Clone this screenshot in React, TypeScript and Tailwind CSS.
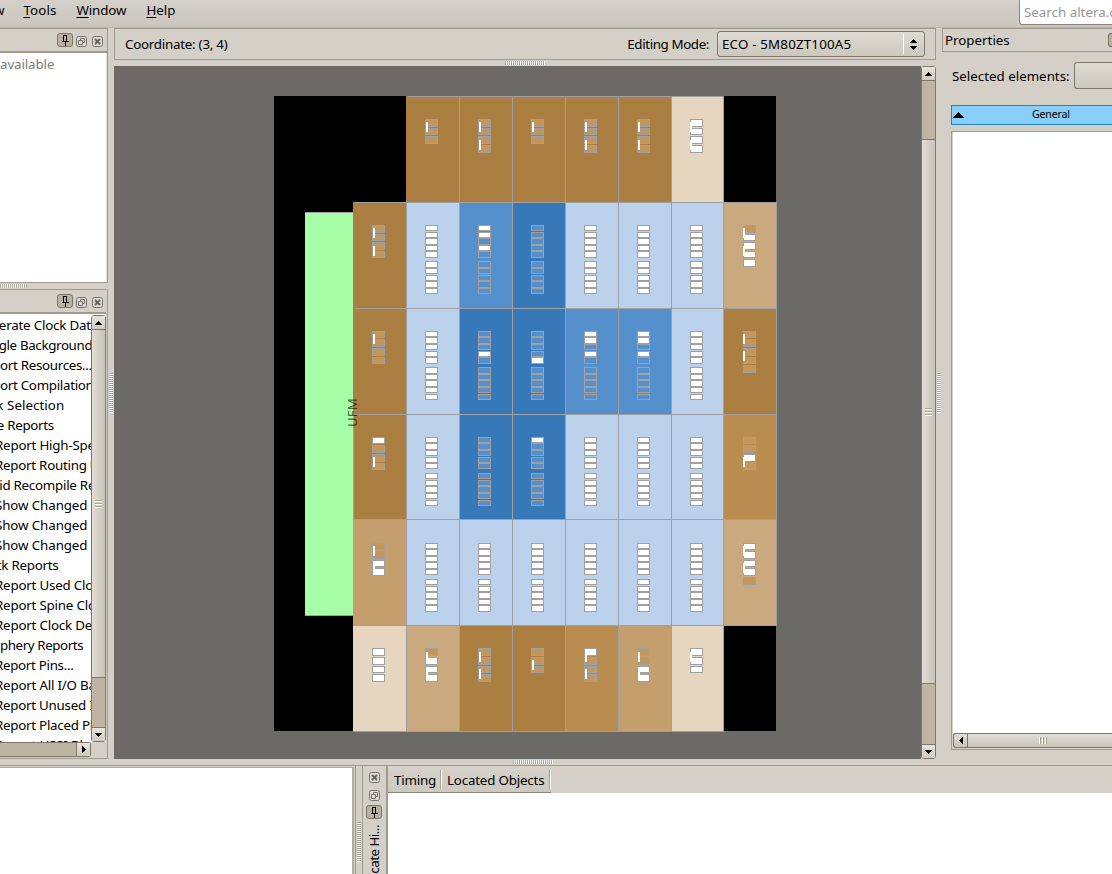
import React from "react";

/* ---------- floorplan data ---------- */

const COL_X = [353, 406, 459, 512, 565, 618, 671, 723, 776];
const ROW_Y = [96, 202, 308, 414, 519, 625, 731];

const GRID = "#a0a0a0";
const CELL: Record<string, string> = {
  E: "#ab7f42",
  F: "#b98d50",
  G: "#c49f6d",
  H: "#cba97e",
  I: "#e6d5bf",
  L: "#bbd1ec",
  M: "#5590cd",
  D: "#3778b8",
};
const IO_FILL = "#c1965f";
const LE_FILL = "#5590cd";

const CELLS = [" EEEEEI ", "ELMDLLLH", "ELDDMMLE", "ELDDLLLF", "GLLLLLLH", "IHEEFGI "];

type Span = [number, number];

const LAB_BOXES: Record<number, Span[]> = {
  1: [[225, 231], [232, 238], [238, 245], [245, 251], [251, 258], [261, 268], [268, 274], [275, 281], [281, 288], [288, 294]],
  2: [[331, 337], [337, 344], [344, 350], [351, 357], [357, 364], [367, 374], [374, 380], [380, 387], [387, 393], [394, 400]],
  3: [[437, 443], [443, 450], [450, 456], [457, 463], [463, 469], [473, 479], [480, 486], [486, 493], [493, 499], [500, 506]],
  4: [[543, 549], [549, 556], [556, 562], [562, 569], [569, 575], [579, 585], [586, 592], [592, 599], [599, 605], [605, 612]],
};

const IO_BOXES: Record<number, Span[]> = {
  0: [[119, 127], [128, 135], [136, 144], [145, 153]],
  1: [[225, 233], [234, 241], [242, 250], [251, 258], [259, 267]],
  2: [[331, 338], [339, 347], [348, 356], [357, 364], [365, 373]],
  3: [[437, 444], [445, 453], [454, 462], [463, 470]],
  4: [[543, 550], [551, 559], [560, 567], [568, 576], [577, 585]],
  5: [[648, 656], [657, 665], [666, 673], [674, 682]],
};

/* "w" is a free element, "u" a used one */
const LAB_USE: Record<string, string> = {
  "1,2": "wwuwuuuuuu",
  "1,3": "uuuuuuuuuu",
  "2,2": "uuuwuuuuuu",
  "2,3": "uuuuwuuuuu",
  "2,4": "wwuwuuuuuu",
  "2,5": "wwuwuuuuuu",
  "3,2": "uuuuuuuuuu",
  "3,3": "wuuuuuuuuu",
};

type Io = { r: number; c: number; use: string; bars: number[]; dx: number };
const IOS: Io[] = [
  { r: 0, c: 1, use: "uuu", bars: [122], dx: 1 },
  { r: 0, c: 2, use: "uuuu", bars: [122, 140], dx: 1 },
  { r: 0, c: 3, use: "uuu", bars: [122], dx: 1 },
  { r: 0, c: 4, use: "uuuu", bars: [122, 140], dx: 1 },
  { r: 0, c: 5, use: "uuuu", bars: [122, 140], dx: 1 },
  { r: 0, c: 6, use: "wwww", bars: [122, 140], dx: 0 },
  { r: 1, c: 0, use: "uuuu", bars: [228, 246], dx: 1 },
  { r: 1, c: 7, use: "uwwww", bars: [228, 246], dx: 0 },
  { r: 2, c: 0, use: "uuuu", bars: [334], dx: 1 },
  { r: 2, c: 7, use: "uuuuu", bars: [334, 351], dx: 0 },
  { r: 3, c: 0, use: "wuuu", bars: [457], dx: 1 },
  { r: 3, c: 7, use: "uuwu", bars: [457], dx: 0 },
  { r: 4, c: 0, use: "uuww", bars: [546, 563], dx: 1 },
  { r: 4, c: 7, use: "wwwwu", bars: [546, 563], dx: 0 },
  { r: 5, c: 0, use: "wwww", bars: [], dx: 1 },
  { r: 5, c: 1, use: "uwww", bars: [652, 669], dx: 1 },
  { r: 5, c: 2, use: "uuuu", bars: [652, 669], dx: 1 },
  { r: 5, c: 3, use: "uuu", bars: [660], dx: 1 },
  { r: 5, c: 4, use: "wuuu", bars: [652, 669], dx: 1 },
  { r: 5, c: 5, use: "uuww", bars: [652, 669], dx: 1 },
  { r: 5, c: 6, use: "www", bars: [652], dx: 0 },
];

function Element({ x, span, fill }: { x: number; span: Span; fill: string }) {
  return (
    <>
      <rect x={x} y={span[0]} width={13} height={span[1] - span[0]} fill={GRID} />
      <rect x={x + 1} y={span[0] + 1} width={11} height={span[1] - span[0] - 2} fill={fill} />
    </>
  );
}

function Floorplan() {
  return (
    <svg
      className="block h-[636px] w-[503px]"
      viewBox="274 96 503 636"
      shapeRendering="crispEdges"
    >
      <rect x={274} y={96} width={502} height={635} fill="#000" />
      <rect x={305} y={212} width={48} height={404} fill={GRID} />
      <rect x={305} y={213} width={48} height={402} fill="#a6ffa6" />
      {CELLS.map((row, r) =>
        row.split("").map((k, c) =>
          k === " " ? null : (
            <g key={`${r}-${c}`}>
              <rect
                x={COL_X[c]}
                y={ROW_Y[r]}
                width={COL_X[c + 1] - COL_X[c] + 1}
                height={ROW_Y[r + 1] - ROW_Y[r] + 1}
                fill={c === 0 && r < 3 ? CELL[k] : GRID}
              />
              {c === 0 && r < 3 && (
                <>
                  <rect x={355} y={ROW_Y[r]} width={52} height={1} fill={GRID} />
                  <rect x={406} y={ROW_Y[r]} width={1} height={106} fill={GRID} />
                </>
              )}
              <rect
                x={COL_X[c] + (c === 0 && r !== 3 ? 0 : 1)}
                y={ROW_Y[r] + 1}
                width={COL_X[c + 1] - COL_X[c] - (c === 0 && r !== 3 ? 0 : 1)}
                height={ROW_Y[r + 1] - ROW_Y[r] - 1}
                fill={CELL[k]}
              />
            </g>
          )
        )
      )}
      <rect x={406} y={96} width={2} height={1} fill={CELL.E} />
      <rect x={406} y={97} width={1} height={105} fill={CELL.E} />
      {[1, 2, 3, 4].map((r) =>
        [1, 2, 3, 4, 5, 6].map((c) =>
          LAB_BOXES[r].map((s, i) => (
            <Element
              key={`${r}-${c}-${i}`}
              x={372 + 53 * c}
              span={s}
              fill={(LAB_USE[`${r},${c}`] || "wwwwwwwwww")[i] === "w" ? "#fff" : LE_FILL}
            />
          ))
        )
      )}
      {IOS.map((io) => (
        <g key={`${io.r}-${io.c}`}>
          {io.use.split("").map((u, i) => (
            <Element
              key={i}
              x={372 + 53 * io.c}
              span={IO_BOXES[io.r][i]}
              fill={u === "w" ? "#fff" : IO_FILL}
            />
          ))}
          {io.bars.map((y) => (
            <rect key={y} x={372 + 53 * io.c + io.dx} y={y} width={2} height={10} fill="#fff" />
          ))}
        </g>
      ))}
      <text
        transform="translate(357 427) rotate(-90)"
        fontSize="13.33"
        fill="#000"
        fillOpacity="0.62"
      >
        UFM
      </text>
    </svg>
  );
}

/* ---------- widgets ---------- */

function PinButton() {
  return (
    <span className="flex h-[14px] w-4 shrink-0 items-center justify-center rounded-[3px] border border-[#7d7566] bg-[#b9b1a2]">
      <svg className="block h-[11px] w-2" viewBox="0 0 8 11" shapeRendering="crispEdges">
        <path d="M2.5 0.5H5.5V6.5H2.5ZM5 1V6M0.5 6.5H7.5M4 7V10.5" fill="none" stroke="#000" strokeWidth="1" />
      </svg>
    </span>
  );
}

function FloatButton() {
  return (
    <svg className="block size-[11px] shrink-0" viewBox="0 0 11 11">
      <rect x="0.5" y="0.5" width="10" height="10" rx="2" fill="#dedad3" stroke="#77736b" />
      <path d="M4.5 4.5V2.5H8.5V6.5H6.5M2.5 4.5H6.5V8.5H2.5Z" fill="none" stroke="#77736b" />
    </svg>
  );
}

function CloseButton() {
  return (
    <svg className="block size-[11px] shrink-0" viewBox="0 0 11 11">
      <rect x="0.5" y="0.5" width="10" height="10" rx="2" fill="#dedad3" stroke="#77736b" />
      <path d="M3 3L8 8M8 3L3 8" stroke="#66625b" strokeWidth="2" />
    </svg>
  );
}

const ARROWS = {
  up: "M3 0H4V1H5V2H6V3H7V4H0V3H1V2H2V1H3Z",
  down: "M0 0H7V1H6V2H5V3H4V4H3V3H2V2H1V1H0Z",
  left: "M0 3H1V2H2V1H3V0H4V7H3V6H2V5H1V4H0Z",
  right: "M0 0H1V1H2V2H3V3H4V4H3V5H2V6H1V7H0Z",
};

function Arrow({ dir }: { dir: keyof typeof ARROWS }) {
  const vertical = dir === "up" || dir === "down";
  return (
    <svg
      className={vertical ? "block h-1 w-[7px]" : "block h-[7px] w-1"}
      viewBox={vertical ? "0 0 7 4" : "0 0 4 7"}
      shapeRendering="crispEdges"
    >
      <path d={ARROWS[dir]} fill="#000" />
    </svg>
  );
}

function GripV() {
  return <span className="h-10 w-1 bg-[repeating-linear-gradient(to_bottom,#aaa59b_0_1px,#fff_1px_2px)]" />;
}

function GripH({ className = "w-10" }: { className?: string }) {
  return (
    <span className={`block h-1 bg-[repeating-linear-gradient(to_right,#aaa59b_0_1px,#fff_1px_2px)] ${className}`} />
  );
}

function VScroll({ before, thumb }: { before: string; thumb: string }) {
  return (
    <div className="flex w-[15px] shrink-0 flex-col rounded-[3px] border border-[#7f776a] bg-[#bdb5a2]">
      <div className="flex h-[14px] shrink-0 items-center justify-center border-b border-[#7f776a] bg-gradient-to-b from-[#e8e4dd] to-[#d0cbc0]">
        <Arrow dir="up" />
      </div>
      <div className={`shrink-0 ${before}`} />
      <div
        className={`flex shrink-0 items-center justify-center border-b border-[#7f776a] bg-gradient-to-r from-[#e2ded7] to-[#c9c4b9] ${thumb}`}
      >
        <span className="h-2 w-[7px] bg-[repeating-linear-gradient(to_bottom,#aba38f_0_1px,#fff_1px_2px,#d4cfc5_2px_3px)]" />
      </div>
      <div className="flex-1" />
      <div className="flex h-[14px] shrink-0 items-center justify-center border-t border-[#7f776a] bg-gradient-to-b from-[#e8e4dd] to-[#d0cbc0]">
        <Arrow dir="down" />
      </div>
    </div>
  );
}

function DockHeader() {
  return (
    <div className="flex h-[25px] shrink-0 items-start gap-[3px] border-t border-b-2 border-[#a19b8e] pt-1 pr-1 pl-[57px]">
      <PinButton />
      <span className="flex gap-[5px] pt-[3px]">
        <FloatButton />
        <CloseButton />
      </span>
    </div>
  );
}

/* ---------- task list ---------- */

const TASKS: [string, string][] = [
  ["-ml-[26px] tracking-[-0.2px]", "Generate Clock Data"],
  ["-ml-[23px] tracking-[-0.35px]", "Toggle Background"],
  ["-ml-[23px] tracking-[-0.3px]", "Report Resources..."],
  ["-ml-[23px] tracking-[-0.3px]", "Report Compilation"],
  ["-ml-6 tracking-[0.05px]", "Task Selection"],
  ["-ml-6 tracking-[-0.3px]", "Core Reports"],
  ["-ml-[5px] tracking-[-0.2px]", "Report High-Speed"],
  ["-ml-[5px] tracking-[-0.25px]", "Report Routing U"],
  ["-ml-[24px] tracking-[-0.25px]", "Rapid Recompile Re"],
  ["-ml-[5px] tracking-[-0.1px]", "Show Changed R"],
  ["-ml-[5px] tracking-[-0.1px]", "Show Changed R"],
  ["-ml-[5px] tracking-[-0.1px]", "Show Changed R"],
  ["-ml-6 tracking-[-0.25px]", "Clock Reports"],
  ["-ml-[5px] tracking-[-0.2px]", "Report Used Cloc"],
  ["-ml-[5px] tracking-[-0.2px]", "Report Spine Cloc"],
  ["-ml-[5px] tracking-[-0.2px]", "Report Clock Det"],
  ["-ml-[23px] tracking-[-0.4px]", "Periphery Reports"],
  ["-ml-[5px] tracking-[-0.3px]", "Report Pins..."],
  ["-ml-[5px] tracking-[-0.2px]", "Report All I/O Ban"],
  ["-ml-[5px] tracking-[-0.25px]", "Report Unused I"],
  ["-ml-[5px] tracking-[-0.25px]", "Report Placed Pi"],
  ["-ml-[5px] tracking-[-0.2px]", "Report HSSI Blo"],
];

function LeftDocks() {
  return (
    <div className="flex w-[108px] shrink-0 flex-col pb-[6px]">
      <div className="flex h-[255px] flex-col border-r border-b border-[#a19b8e]">
        <DockHeader />
        <div className="flex-1 overflow-hidden border-r border-[#e4e1da] bg-white pt-px tracking-[-0.1px] text-[#7d7b77]">
          available
        </div>
      </div>
      <div className="flex h-[6px] items-center">
        <GripH className="w-[27px]" />
      </div>
      <div className="flex min-h-0 flex-1 flex-col border-r border-b border-[#a19b8e] pr-px">
        <DockHeader />
        <div className="flex h-[428px] bg-white pt-px">
          <ul className="w-[91px] overflow-hidden">
            {TASKS.map(([place, label], i) => (
              <li key={i} className={`h-5 leading-5 whitespace-nowrap text-black ${place}`}>
                {label}
              </li>
            ))}
          </ul>
          <VScroll before="h-0" thumb="h-[348px]" />
        </div>
        <div className="flex h-[15px] w-[91px] rounded-r-[3px] border border-l-0 border-[#7f776a] bg-[#bdb5a2]">
          <div className="ml-auto flex w-[14px] items-center justify-center border-l border-[#7f776a] bg-gradient-to-b from-[#e8e4dd] to-[#d0cbc0]">
            <Arrow dir="right" />
          </div>
        </div>
      </div>
    </div>
  );
}

function Center() {
  return (
    <div className="flex w-[822px] shrink-0 flex-col">
      <div className="flex h-8 shrink-0 items-center border border-[#a19b8e] pr-[10px] pl-[10px]">
        <span className="tracking-[-0.24px]">Coordinate: (3, 4)</span>
        <span className="ml-auto tracking-[-0.38px]">Editing Mode:</span>
        <div className="ml-2 flex h-[26px] w-[208px] items-center rounded-[3px] border border-[#7f776a] bg-gradient-to-b from-[#dfdbd4] to-[#cdc8bd] pl-1">
          <span className="flex-1 tracking-[0.18px]">ECO - 5M80ZT100A5</span>
          <span className="h-5 w-px bg-white" />
          <span className="flex w-[20px] flex-col items-center gap-[3px] pr-[2px]">
            <Arrow dir="up" />
            <Arrow dir="down" />
          </span>
        </div>
      </div>
      <div className="flex h-[6px] shrink-0 items-center justify-center">
        <GripH />
      </div>
      <div className="flex h-[693px] shrink-0">
        <div className="w-[807px] bg-[#6b6a66] pt-[30px] pl-[160px]">
          <Floorplan />
        </div>
        <VScroll before="h-[59px] border-b border-[#7f776a]" thumb="h-[544px]" />
      </div>
    </div>
  );
}

function Properties() {
  return (
    <div className="flex w-[170px] shrink-0 flex-col overflow-hidden">
      <div className="flex h-6 shrink-0 items-center border border-r-0 border-[#a19b8e] pl-[2px]">
        <span>Properties</span>
        <span className="ml-auto h-[14px] w-1 rounded-l-[3px] border border-r-0 border-[#7d7566] bg-[#b9b1a2]" />
      </div>
      <div className="mt-[10px] flex h-[27px] shrink-0 items-center pl-[10px]">
        <span className="flex-1 whitespace-nowrap">Selected elements:</span>
        <span className="h-[27px] w-[38px] rounded-l-[3px] border border-r-0 border-[#7f776a] bg-gradient-to-b from-[#dfdbd4] to-[#cdc8bd]" />
      </div>
      <div className="mt-4 ml-[9px] flex h-5 shrink-0 items-center border border-r-0 border-[#1f84c4] bg-[#89cffb]">
        <svg className="ml-px block h-[6px] w-[11px]" viewBox="0 0 11 6" shapeRendering="crispEdges">
          <path d="M5 0H6V1H7V2H8V3H9V4H10V5H11V6H0V5H1V4H2V3H3V2H4V1H5Z" />
        </svg>
        <span className="-mt-0.5 ml-[68px] text-[10.67px] leading-none tracking-[-0.2px]">General</span>
      </div>
      <div className="mt-[6px] ml-[9px] flex h-[619px] shrink-0 flex-col border border-r-0 border-[#a19b8e] pb-px pl-px">
        <div className="flex-1 bg-white" />
        <div className="flex h-[15px] rounded-l-[3px] border border-r-0 border-[#7f776a] bg-gradient-to-b from-[#e2ded7] to-[#c9c4b9]">
          <div className="flex w-[14px] items-center justify-center border-r border-[#7f776a]">
            <Arrow dir="left" />
          </div>
          <span className="mt-[3px] ml-[71px] h-[7px] w-2 bg-[repeating-linear-gradient(to_right,#fff_0_1px,#aba38f_1px_2px,#d4cfc5_2px_3px)]" />
        </div>
      </div>
    </div>
  );
}

function Bottom() {
  return (
    <div className="flex h-[109px] shrink-0 border-t border-[#a19b8e]">
      <div className="w-[356px] shrink-0 border-r border-[#a19b8e] pt-px pr-px">
        <div className="h-full border-t border-r-2 border-[#b3ada0] bg-white" />
      </div>
      <div className="flex w-[6px] shrink-0 justify-center pt-14">
        <GripV />
      </div>
      <div className="flex w-[26px] shrink-0 flex-col items-center overflow-hidden border-r-2 border-l border-[#a19b8e] pt-[6px] pr-px">
        <CloseButton />
        <span className="mt-[7px]">
          <FloatButton />
        </span>
        <span className="mt-1">
          <PinButton />
        </span>
        <span className="mt-[6px] rotate-180 leading-[18px] tracking-[-0.5px] whitespace-nowrap [writing-mode:vertical-rl]">
          cate Hi...
        </span>
      </div>
      <div className="flex flex-1 flex-col">
        <div className="flex h-[27px] shrink-0">
          <div className="flex items-center border-b border-[#8d8577] bg-gradient-to-b from-[#d6d2ca] to-[#cec9c0] whitespace-nowrap">
            <span className="w-[52px] pt-0.5 pl-[6px] tracking-[-0.2px]">Timing</span>
            <span className="h-5 w-[2px] border-l border-[#aaa498] bg-white" />
            <span className="w-[107px] pt-0.5 pl-[5px] tracking-[-0.18px]">Located Objects</span>
            <span className="h-5 w-[2px] border-l border-[#aaa498] bg-white" />
          </div>
        </div>
        <div className="flex-1 bg-white" />
      </div>
    </div>
  );
}

export default function App() {
  return (
    <div className="flex h-[874px] w-[1112px] flex-col overflow-hidden bg-[#d4d0c8] font-['Noto_Sans',sans-serif] text-[13.33px] leading-5 text-black">
      <div className="flex h-7 shrink-0 border-b border-[#bcb5a8] bg-gradient-to-b from-[#d5d1ca] to-[#cac5bd]">
        <div className="flex gap-5 underline-offset-2">
          <span className="-ml-[6px]">w</span>
          <span className="-ml-px tracking-[0.1px]">
            <u>T</u>ools
          </span>
          <span className="tracking-[-0.1px]">
            <u>W</u>indow
          </span>
          <span>
            <u>H</u>elp
          </span>
        </div>
        <div className="ml-auto h-[25px] w-[93px] overflow-hidden rounded-bl-[3px] border-b border-l border-[#8d8577] bg-white pt-[2px] pl-1 whitespace-nowrap text-[#969696]">
          Search altera.co
        </div>
      </div>
      <div className="flex h-[737px] shrink-0">
        <LeftDocks />
        <div className="flex w-[6px] shrink-0 items-center justify-center pb-[7px]">
          <GripV />
        </div>
        <Center />
        <div className="flex w-[6px] shrink-0 items-center justify-center pb-[7px]">
          <GripV />
        </div>
        <Properties />
      </div>
      <div className="-mt-[6px] flex h-[6px] shrink-0 items-center pl-[513px]">
        <GripH />
      </div>
      <Bottom />
    </div>
  );
}
